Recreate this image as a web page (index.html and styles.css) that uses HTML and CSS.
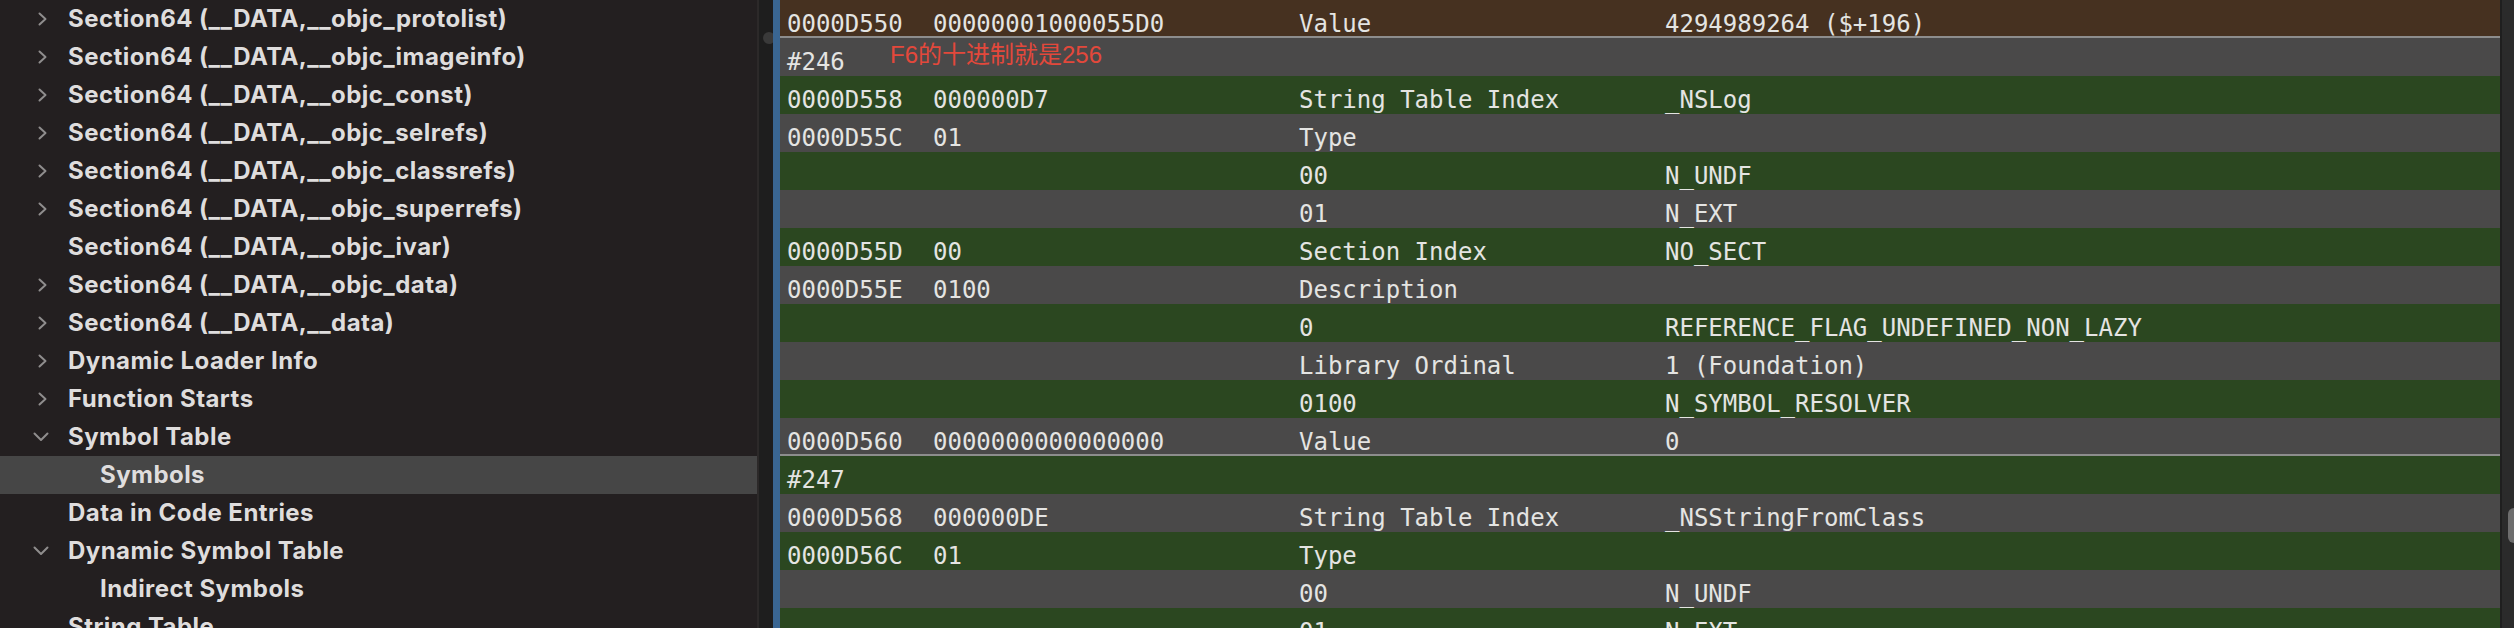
FILE: index.html
```html
<!DOCTYPE html>
<html>
<head>
<meta charset="utf-8">
<link rel="stylesheet" href="styles.css">
</head>
<body class="app">
  <nav class="sidebar">
    <div class="node"><span class="twist"><svg class="chev-right" width="12" height="14" viewBox="0 0 12 14"><path d="M2.5 1.5 L8.5 7 L2.5 12.5"/></svg></span><span class="label">Section64 (__DATA,__objc_protolist)</span></div>
    <div class="node"><span class="twist"><svg class="chev-right" width="12" height="14" viewBox="0 0 12 14"><path d="M2.5 1.5 L8.5 7 L2.5 12.5"/></svg></span><span class="label">Section64 (__DATA,__objc_imageinfo)</span></div>
    <div class="node"><span class="twist"><svg class="chev-right" width="12" height="14" viewBox="0 0 12 14"><path d="M2.5 1.5 L8.5 7 L2.5 12.5"/></svg></span><span class="label">Section64 (__DATA,__objc_const)</span></div>
    <div class="node"><span class="twist"><svg class="chev-right" width="12" height="14" viewBox="0 0 12 14"><path d="M2.5 1.5 L8.5 7 L2.5 12.5"/></svg></span><span class="label">Section64 (__DATA,__objc_selrefs)</span></div>
    <div class="node"><span class="twist"><svg class="chev-right" width="12" height="14" viewBox="0 0 12 14"><path d="M2.5 1.5 L8.5 7 L2.5 12.5"/></svg></span><span class="label">Section64 (__DATA,__objc_classrefs)</span></div>
    <div class="node"><span class="twist"><svg class="chev-right" width="12" height="14" viewBox="0 0 12 14"><path d="M2.5 1.5 L8.5 7 L2.5 12.5"/></svg></span><span class="label">Section64 (__DATA,__objc_superrefs)</span></div>
    <div class="node"><span class="twist"></span><span class="label">Section64 (__DATA,__objc_ivar)</span></div>
    <div class="node"><span class="twist"><svg class="chev-right" width="12" height="14" viewBox="0 0 12 14"><path d="M2.5 1.5 L8.5 7 L2.5 12.5"/></svg></span><span class="label">Section64 (__DATA,__objc_data)</span></div>
    <div class="node"><span class="twist"><svg class="chev-right" width="12" height="14" viewBox="0 0 12 14"><path d="M2.5 1.5 L8.5 7 L2.5 12.5"/></svg></span><span class="label">Section64 (__DATA,__data)</span></div>
    <div class="node"><span class="twist"><svg class="chev-right" width="12" height="14" viewBox="0 0 12 14"><path d="M2.5 1.5 L8.5 7 L2.5 12.5"/></svg></span><span class="label">Dynamic Loader Info</span></div>
    <div class="node"><span class="twist"><svg class="chev-right" width="12" height="14" viewBox="0 0 12 14"><path d="M2.5 1.5 L8.5 7 L2.5 12.5"/></svg></span><span class="label">Function Starts</span></div>
    <div class="node"><span class="twist"><svg class="chev-down" width="16" height="10" viewBox="0 0 16 10"><path d="M1.5 1.5 L8 8 L14.5 1.5"/></svg></span><span class="label">Symbol Table</span></div>
    <div class="node child selected"><span class="twist"></span><span class="label">Symbols</span></div>
    <div class="node"><span class="twist"></span><span class="label">Data in Code Entries</span></div>
    <div class="node"><span class="twist"><svg class="chev-down" width="16" height="10" viewBox="0 0 16 10"><path d="M1.5 1.5 L8 8 L14.5 1.5"/></svg></span><span class="label">Dynamic Symbol Table</span></div>
    <div class="node child"><span class="twist"></span><span class="label">Indirect Symbols</span></div>
    <div class="node"><span class="twist"></span><span class="label">String Table</span></div>
  </nav>
  <div class="divider"><span class="knob"></span></div>
  <main class="table">
    <div class="row hl sep"><span>0000D550</span><span>00000001000055D0</span><span>Value</span><span>4294989264 ($+196)</span></div>
    <div class="row odd group"><span>#246</span><span></span><span></span><span></span><span class="note">F6的十进制就是256</span></div>
    <div class="row even"><span>0000D558</span><span>000000D7</span><span>String Table Index</span><span>_NSLog</span></div>
    <div class="row odd"><span>0000D55C</span><span>01</span><span>Type</span><span></span></div>
    <div class="row even"><span></span><span></span><span>00</span><span>N_UNDF</span></div>
    <div class="row odd"><span></span><span></span><span>01</span><span>N_EXT</span></div>
    <div class="row even"><span>0000D55D</span><span>00</span><span>Section Index</span><span>NO_SECT</span></div>
    <div class="row odd"><span>0000D55E</span><span>0100</span><span>Description</span><span></span></div>
    <div class="row even"><span></span><span></span><span>0</span><span>REFERENCE_FLAG_UNDEFINED_NON_LAZY</span></div>
    <div class="row odd"><span></span><span></span><span>Library Ordinal</span><span>1 (Foundation)</span></div>
    <div class="row even"><span></span><span></span><span>0100</span><span>N_SYMBOL_RESOLVER</span></div>
    <div class="row odd sep"><span>0000D560</span><span>0000000000000000</span><span>Value</span><span>0</span></div>
    <div class="row even"><span>#247</span><span></span><span></span><span></span></div>
    <div class="row odd"><span>0000D568</span><span>000000DE</span><span>String Table Index</span><span>_NSStringFromClass</span></div>
    <div class="row even"><span>0000D56C</span><span>01</span><span>Type</span><span></span></div>
    <div class="row odd"><span></span><span></span><span>00</span><span>N_UNDF</span></div>
    <div class="row even"><span></span><span></span><span>01</span><span>N_EXT</span></div>
  </main>
  <div class="vscroll"><span class="thumb"></span></div>
</body>
</html>
```

FILE: styles.css
```css
html, body {
  margin: 0;
  padding: 0;
}

.app {
  width: 2514px;
  height: 628px;
  overflow: hidden;
  display: flex;
  background: #231f20;
}

/* ---------- sidebar ---------- */
.sidebar {
  width: 757px;
  flex: none;
  background: #231f20;
  font-family: Inter, "Liberation Sans", sans-serif;
  font-weight: 700;
  font-size: 24px;
  letter-spacing: 0.45px;
  color: #dfdddd;
}

.node {
  display: flex;
  align-items: center;
  height: 38px;
  line-height: 38px;
  white-space: nowrap;
}

.node.selected {
  background: #464646;
}

.twist {
  width: 68px;
  flex: none;
  display: flex;
  align-items: center;
}

.node.child .twist {
  width: 100px;
}

.twist svg {
  fill: none;
  stroke: #8f8d8d;
  stroke-width: 2;
  stroke-linecap: round;
  stroke-linejoin: round;
}

.chev-right {
  margin-left: 37px;
}

.chev-down {
  margin-left: 33px;
}

/* ---------- split divider ---------- */
.divider {
  width: 16px;
  flex: none;
  box-sizing: border-box;
  border-left: 2px solid #2c2929;
  background: #1e1e1e;
  position: relative;
  overflow: hidden;
}

.knob {
  position: absolute;
  left: 4px;
  top: 32px;
  width: 12px;
  height: 12px;
  border-radius: 50%;
  background: #3a3a3a;
}

/* ---------- data table ---------- */
.table {
  flex: 1;
  min-width: 0;
  border-left: 7px solid #3a6692;
  font-family: "DejaVu Sans Mono", "Liberation Mono", monospace;
  font-size: 24px;
  color: #e4e4e2;
}

.row {
  position: relative;
  display: grid;
  grid-template-columns: 146px 366px 366px 1fr;
  height: 38px;
  box-sizing: border-box;
  padding: 10px 0 0 7px;
  line-height: 28px;
  white-space: pre;
}

.row.hl {
  background: #463120;
}

.row.odd {
  background: #4a4949;
}

.row.even {
  background: #2b4720;
}

.row.sep {
  border-bottom: 2px solid #8d8d8d;
}

.note {
  position: absolute;
  left: 110px;
  top: 5px;
  font-family: "Liberation Sans", "Noto Sans CJK SC", sans-serif;
  font-size: 24px;
  line-height: 24px;
  color: #e3483b;
}

/* ---------- vertical scroller ---------- */
.vscroll {
  width: 14px;
  flex: none;
  box-sizing: border-box;
  border-left: 2px solid #1f1f1f;
  background: #2b2b2b;
  position: relative;
  overflow: hidden;
}

.thumb {
  position: absolute;
  left: 6px;
  top: 508px;
  width: 12px;
  height: 35px;
  border-radius: 6px;
  background: #6d6d6d;
}
```
